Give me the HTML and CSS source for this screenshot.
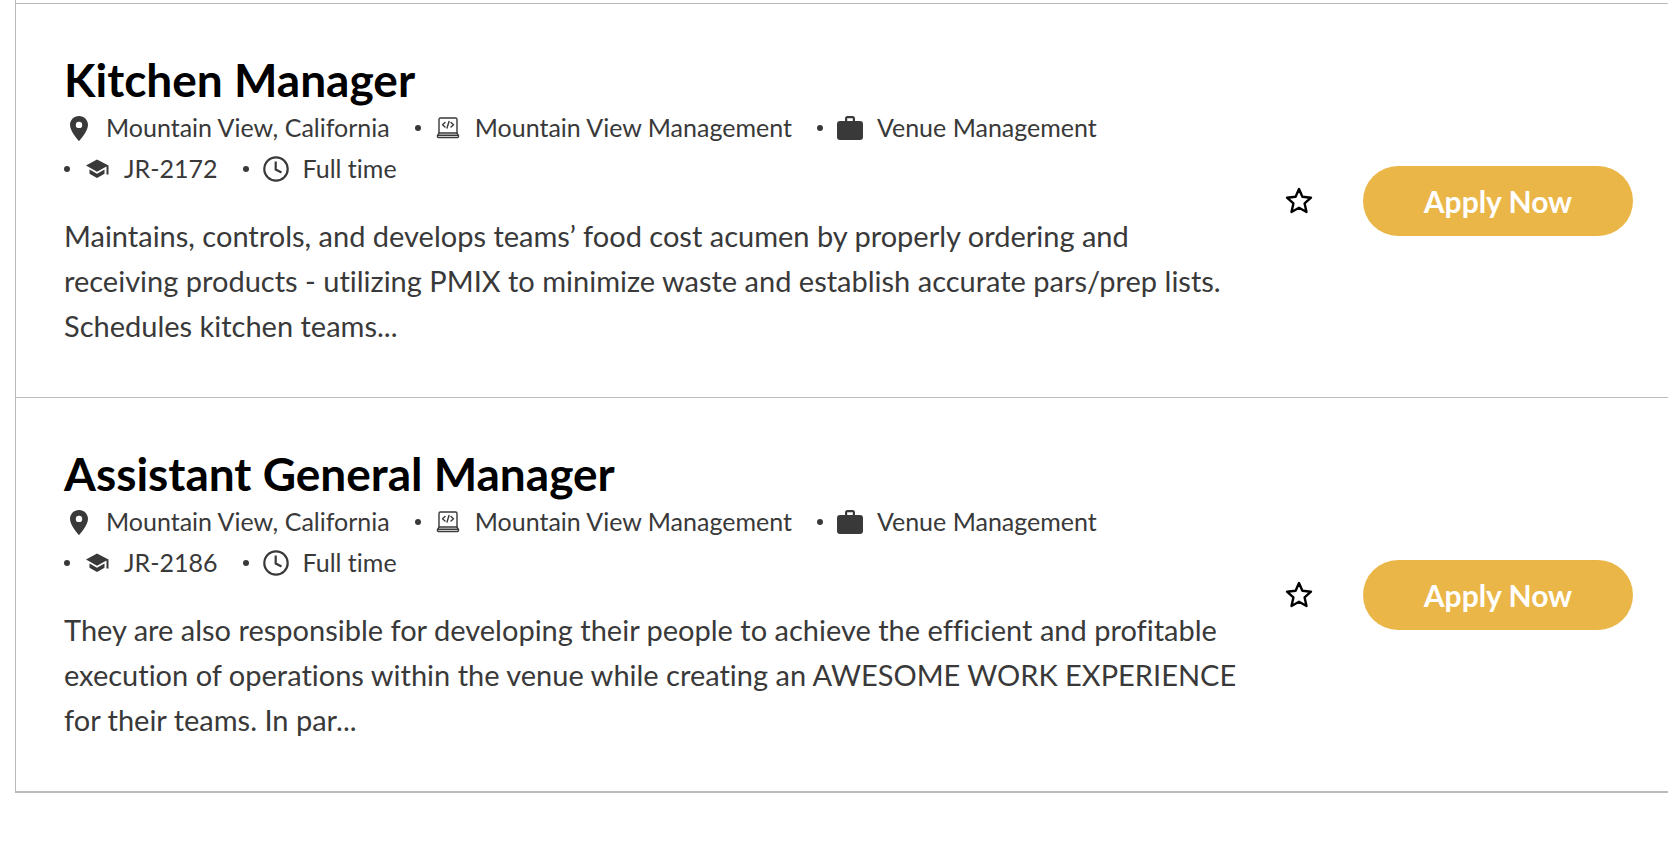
FILE: index.html
```html
<!DOCTYPE html>
<html lang="en">
<head>
    <meta charset="UTF-8">
    <meta name="viewport" content="width=device-width, initial-scale=1.0">
    <title>Job Results</title>
    <link rel="stylesheet" href="styles.css">
</head>
<body>
    <!-- Shared icons -->
    <svg class="sprite" aria-hidden="true">
        <symbol id="icon-pin" viewBox="0 0 30 30">
            <path fill="currentColor" fill-rule="evenodd" d="M15 3C9.900 3 6 6.900 6 11.900C6 18.300 15 28 15 28S24 18.300 24 11.900C24 6.900 20.100 3 15 3ZM15 8.700A3.200 3.200 0 1 1 15 15.100A3.200 3.200 0 0 1 15 8.700Z"/>
        </symbol>
        <symbol id="icon-laptop" viewBox="0 0 30 30">
            <g fill="none" stroke="currentColor" stroke-width="1.400" stroke-linecap="round" stroke-linejoin="round">
                <path d="M6 20V6.500Q6 5 7.500 5H22.500Q24 5 24 6.500V20"/>
                <path d="M6 20H24L25.500 22.500V23.500Q25.500 24.500 24.500 24.500H5.500Q4.500 24.500 4.500 23.500V22.500ZM4.500 22.300H25.500"/>
                <path d="M12 9.500L9.500 11.800L12 14M18 9.500L20.500 11.800L18 14M16 8.500L14 15"/>
            </g>
        </symbol>
        <symbol id="icon-briefcase" viewBox="0 0 30 30">
            <path fill="currentColor" fill-rule="evenodd" d="M10 8V5.500Q10 3 12.500 3H17.500Q20 3 20 5.500V8H25Q28 8 28 11V24Q28 27 25 27H5Q2 27 2 24V11Q2 8 5 8ZM12.200 8H17.800V5.200H12.200Z"/>
        </symbol>
        <symbol id="icon-cap" viewBox="0 0 30 30">
            <path fill="currentColor" d="M15 5.500L4 11.500L15 17.700L24.500 12.500V20.500H26.500V11.500ZM7.500 15.500V19.700L15 24L22.500 19.700V15.500L15 19.700Z"/>
        </symbol>
        <symbol id="icon-clock" viewBox="0 0 30 30">
            <g fill="none" stroke="currentColor" stroke-width="2.200">
                <circle cx="15" cy="15" r="11.700"/>
                <path d="M14.700 7.500V15.500L20.500 18.500"/>
            </g>
        </symbol>
        <symbol id="icon-star" viewBox="0 0 30 30">
            <path fill="none" stroke="currentColor" stroke-width="2.400" stroke-linejoin="round" d="M15 3L18.400 10.800L27 11.700L20.600 17.400L22.500 26L15 21.800L7.500 26L9.400 17.400L3 11.700L11.600 10.800Z"/>
        </symbol>
    </svg>

    <main class="job-list">
        <article class="job">
            <div class="job-info">
                <h2>Kitchen Manager</h2>
                <ul class="job-meta">
                    <li><svg class="icon"><use href="#icon-pin"/></svg>Mountain View, California</li>
                    <li><svg class="icon"><use href="#icon-laptop"/></svg>Mountain View Management</li>
                    <li><svg class="icon"><use href="#icon-briefcase"/></svg>Venue Management</li>
                    <li><svg class="icon"><use href="#icon-cap"/></svg>JR-2172</li>
                    <li><svg class="icon"><use href="#icon-clock"/></svg>Full time</li>
                </ul>
                <p>Maintains, controls, and develops teams’ food cost acumen by properly ordering and receiving products - utilizing PMIX to minimize waste and establish accurate pars/prep lists. Schedules kitchen teams...</p>
            </div>
            <button type="button" class="save-btn" aria-label="Save Kitchen Manager"><svg class="icon"><use href="#icon-star"/></svg></button>
            <a href="#" class="apply-btn">Apply Now</a>
        </article>

        <article class="job">
            <div class="job-info">
                <h2>Assistant General Manager</h2>
                <ul class="job-meta">
                    <li><svg class="icon"><use href="#icon-pin"/></svg>Mountain View, California</li>
                    <li><svg class="icon"><use href="#icon-laptop"/></svg>Mountain View Management</li>
                    <li><svg class="icon"><use href="#icon-briefcase"/></svg>Venue Management</li>
                    <li><svg class="icon"><use href="#icon-cap"/></svg>JR-2186</li>
                    <li><svg class="icon"><use href="#icon-clock"/></svg>Full time</li>
                </ul>
                <p>They are also responsible for developing their people to achieve the efficient and profitable execution of operations within the venue while creating an AWESOME WORK EXPERIENCE for their teams. In par...</p>
            </div>
            <button type="button" class="save-btn" aria-label="Save Assistant General Manager"><svg class="icon"><use href="#icon-star"/></svg></button>
            <a href="#" class="apply-btn">Apply Now</a>
        </article>
    </main>
</body>
</html>
```
FILE: styles.css
```css
* {
    box-sizing: border-box;
}
body {
    font-family: Futura, "Futura PT", Lato, sans-serif;
    font-variant-ligatures: none;
    background-color: #fff;
    color: #393939;
    margin: 0;
}
.sprite {
    position: absolute;
    width: 0;
    height: 0;
}
.job-list {
    margin-left: 15px;
    padding-top: 3px;
    border-left: 1px solid #bbb;
    border-bottom: 2px solid #bbb;
}
.job {
    display: flex;
    align-items: center;
    padding: 49px 35px 49px 48px;
    border-top: 1px solid #bbb;
}
.job-info {
    flex: 1;
}
h2 {
    margin: 0;
    color: #000;
    font-size: 46px;
    font-weight: 700;
    line-height: 54px;
}
.job-meta {
    display: flex;
    flex-wrap: wrap;
    column-gap: 25px;
    margin: 0 0 24px;
    padding: 0;
    list-style: none;
    font-size: 25px;
    line-height: 41px;
}
.job-meta li {
    display: flex;
    align-items: center;
    gap: 12px;
}
.job-meta li + li::before {
    content: "";
    width: 6px;
    height: 6px;
    border-radius: 50%;
    background: #393939;
}
.icon {
    display: block;
    width: 30px;
    height: 30px;
}
p {
    margin: 0;
    font-size: 29px;
    line-height: 45px;
}
.save-btn {
    margin: 0 49px 0 40px;
    padding: 0;
    border: none;
    background: none;
    color: #000;
    cursor: pointer;
}
.apply-btn {
    width: 270px;
    border-radius: 35px;
    background-color: #eab648;
    color: #fff;
    font-size: 30px;
    font-weight: 700;
    line-height: 70px;
    text-align: center;
    text-decoration: none;
}
.apply-btn:hover {
    background-color: #d9a437;
}
```
